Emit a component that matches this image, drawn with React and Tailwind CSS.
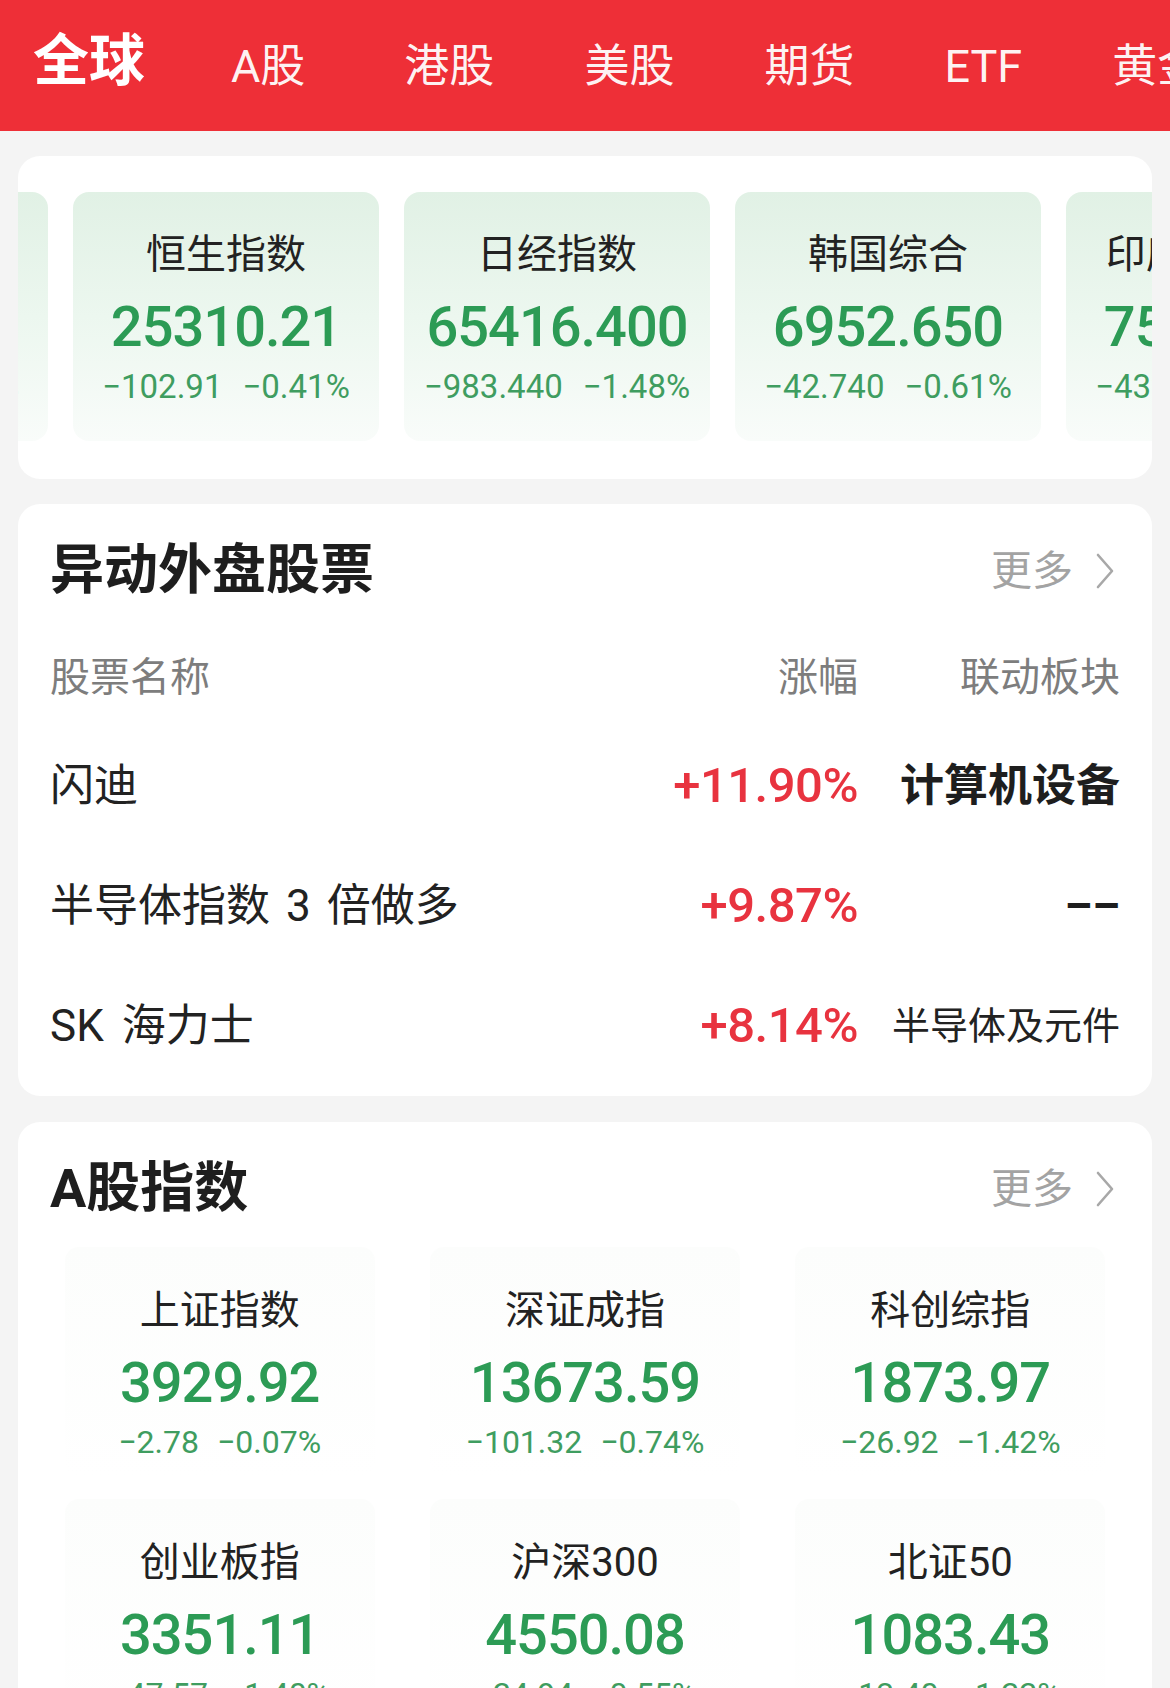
import React from 'react'

const tabs = ['A股', '港股', '美股', '期货', 'ETF', '黄金']

const globalIdx = [
  { name: '纳斯达克', value: '22870.36', chg: '-445.80', pct: '-1.91%' },
  { name: '恒生指数', value: '25310.21', chg: '-102.91', pct: '-0.41%' },
  { name: '日经指数', value: '65416.400', chg: '-983.440', pct: '-1.48%' },
  { name: '韩国综合', value: '6952.650', chg: '-42.740', pct: '-0.61%' },
  { name: '印度SENSEX', value: '75712.33', chg: '-432.18', pct: '-0.57%' },
]

const aIdx = [
  { name: '上证指数', value: '3929.92', chg: '-2.78', pct: '-0.07%' },
  { name: '深证成指', value: '13673.59', chg: '-101.32', pct: '-0.74%' },
  { name: '科创综指', value: '1873.97', chg: '-26.92', pct: '-1.42%' },
  { name: '创业板指', value: '3351.11', chg: '-47.57', pct: '-1.40%' },
  { name: '沪深300', value: '4550.08', chg: '-24.94', pct: '-0.55%' },
  { name: '北证50', value: '1083.43', chg: '-13.40', pct: '-1.22%' },
]

const rows = [
  { key: 'sandisk', name: '闪迪', pct: '+11.90%', sector: '计算机设备', big: true },
  { key: 'semi', name: <>半导体指数<span className="mx-[16px]">3</span>倍做多</>, pct: '+9.87%', sector: '––', big: true },
  { key: 'skh', name: <>SK<span className="ml-[18px]">海力士</span></>, pct: '+8.14%', sector: '半导体及元件', big: false },
]

function More(){
  return (
    <div className="flex items-center gap-[22px] pr-[5px] text-[41px] leading-none text-[#a3a3a3]">
      <span>更多</span>
      <svg width="20" height="36" viewBox="0 0 20 36" fill="none">
        <path d="M3 2 L17 18 L3 34" stroke="#a8a8a8" strokeWidth="2.6" strokeLinecap="round" strokeLinejoin="round" />
      </svg>
    </div>
  )
}

export default function App(){
  return (
    <div className="w-[1170px] h-[1688px] overflow-hidden bg-[#f4f4f4] font-['Roboto','Noto_Sans_CJK_SC',sans-serif]">
      {/* top tabs */}
      <div className="h-[131px] bg-[#ee2f37] flex items-end pb-[42px] pl-[33px] overflow-hidden whitespace-nowrap">
        <div className="text-[56px] leading-none font-bold text-white">全球</div>
        <div className="flex gap-[90px] ml-[86px] text-[45px] leading-none text-white/95">
          {tabs.map((t, i) => <div key={t} className={i === 0 ? 'mr-[9px]' : ''}>{t}</div>)}
        </div>
      </div>

      {/* global index strip */}
      <div className="mx-[18px] mt-[25px] h-[323px] rounded-[22px] bg-white overflow-hidden py-[36px]">
        <div className="flex gap-[25px] ml-[-276px]">
          {globalIdx.map(g => (
            <div key={g.name} className="w-[306px] h-[249px] shrink-0 rounded-[16px] bg-gradient-to-b from-[#e1f1e5] via-[#ecf7ef] to-[#f9fcfa] flex flex-col items-center whitespace-nowrap">
              <div className="mt-[39px] text-[40px] leading-[48px] text-[#222]">{g.name}</div>
              <div className="mt-[16px] text-[56px] leading-[64px] font-medium tracking-[-1px] text-[#2c9b55]">{g.value}</div>
              <div className="mt-[8px] text-[33px] leading-[40px] text-[#3f9d60] flex gap-[20px]">
                <span>{g.chg.replace('-', '−')}</span>
                <span>{g.pct.replace('-', '−')}</span>
              </div>
            </div>
          ))}
        </div>
      </div>

      {/* movers */}
      <div className="mx-[18px] mt-[25px] h-[592px] rounded-[22px] bg-white pt-[35px] px-[32px]">
        <div className="h-[64px] flex items-center justify-between">
          <div className="text-[54px] font-bold leading-none text-[#1e1e1e]">异动外盘股票</div>
          <More />
        </div>
        <div className="mt-[45px] h-[60px] flex items-center text-[40px] text-[#7d7d7d]">
          <div className="flex-1">股票名称</div>
          <div className="text-right">涨幅</div>
          <div className="w-[262px] text-right">联动板块</div>
        </div>
        <div className="mt-[18px]">
          {rows.map(m => (
            <div key={m.key} className="h-[120px] flex items-center">
              <div className="flex-1 text-[44px] text-[#222]">{m.name}</div>
              <div className="text-[49px] font-medium tracking-[-0.5px] text-[#e8333f]">{m.pct}</div>
              <div className={m.big ? 'w-[262px] text-right text-[44px] font-bold text-[#1e1e1e]' : 'w-[262px] text-right text-[38px] text-[#222]'}>{m.sector}</div>
            </div>
          ))}
        </div>
      </div>

      {/* A-share indices */}
      <div className="mx-[18px] mt-[26px] h-[640px] rounded-[22px] bg-white pt-[35px]">
        <div className="h-[64px] flex items-center justify-between px-[32px]">
          <div className="text-[54px] font-bold leading-none text-[#1e1e1e]">A股指数</div>
          <More />
        </div>
        <div className="mt-[26px] grid grid-cols-3 px-[19px]">
          {aIdx.map(a => (
            <div key={a.name} className="h-[252px] flex justify-center">
              <div className="w-[310px] h-[230px] rounded-[14px] bg-gradient-to-b from-[#fcfdfc] to-white flex flex-col items-center whitespace-nowrap">
                <div className="mt-[40px] text-[40px] leading-[48px] text-[#222]">{a.name}</div>
                <div className="mt-[16px] text-[56px] leading-[64px] font-medium tracking-[-1px] text-[#2c9b55]">{a.value}</div>
                <div className="mt-[7px] text-[32px] leading-[40px] text-[#3f9d60] flex gap-[18px]">
                  <span>{a.chg.replace('-', '−')}</span>
                  <span>{a.pct.replace('-', '−')}</span>
                </div>
              </div>
            </div>
          ))}
        </div>
      </div>
    </div>
  )
}
